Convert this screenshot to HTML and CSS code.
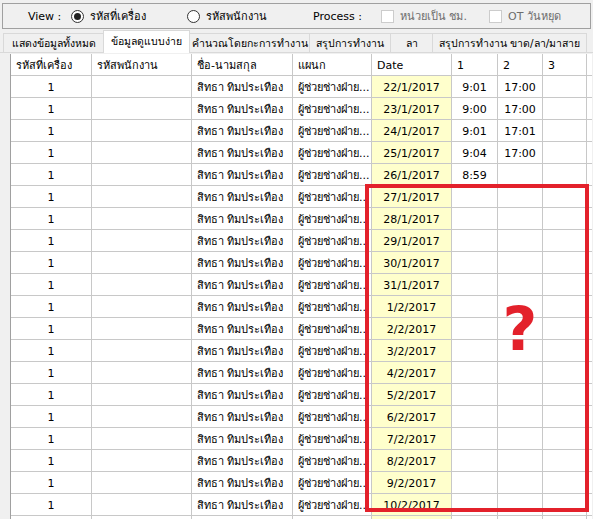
FILE: index.html
```html
<!DOCTYPE html>
<html lang="th">
<head>
<meta charset="utf-8">
<title>Time Attendance</title>
<link rel="stylesheet" href="styles.css">
</head>
<body>
<div class="window">
  <div class="viewbar">
    <span class="item view">View :</span>
    <span class="item radio1"><span class="rb on"></span>รหัสที่เครื่อง</span>
    <span class="item radio2"><span class="rb"></span>รหัสพนักงาน</span>
    <span class="item process">Process :</span>
    <span class="item check1 dis"><span class="cb"></span>หน่วยเป็น ชม.</span>
    <span class="item check2 dis"><span class="cb"></span>OT วันหยุด</span>
  </div>
  <div class="tabs">
    <span class="tab t1">แสดงข้อมูลทั้งหมด</span>
    <span class="tab t2 active">ข้อมูลดูแบบง่าย</span>
    <span class="tab t3">คำนวณโดยกะการทำงาน</span>
    <span class="tab t4">สรุปการทำงาน</span>
    <span class="tab t5">ลา</span>
    <span class="tab t6">สรุปการทำงาน ขาด/ลา/มาสาย</span>
  </div>
  <div class="panel">
    <table class="grid">
      <colgroup>
        <col class="c-mach"><col class="c-emp"><col class="c-name"><col class="c-dept"><col class="c-date"><col class="c-t1"><col class="c-t2"><col class="c-t3"><col class="c-fill">
      </colgroup>
      <thead>
        <tr><th>รหัสที่เครื่อง</th><th>รหัสพนักงาน</th><th>ชื่อ-นามสกุล</th><th>แผนก</th><th>Date</th><th>1</th><th>2</th><th>3</th><th class="fill"></th></tr>
      </thead>
      <tbody>
        <tr><td class="num">1</td><td></td><td>สิทธา ทิมประเทือง</td><td>ผู้ช่วยช่างฝ่าย...</td><td class="date">22/1/2017</td><td class="tm">9:01</td><td class="tm">17:00</td><td></td><td class="fill"></td></tr>
        <tr><td class="num">1</td><td></td><td>สิทธา ทิมประเทือง</td><td>ผู้ช่วยช่างฝ่าย...</td><td class="date">23/1/2017</td><td class="tm">9:00</td><td class="tm">17:00</td><td></td><td class="fill"></td></tr>
        <tr><td class="num">1</td><td></td><td>สิทธา ทิมประเทือง</td><td>ผู้ช่วยช่างฝ่าย...</td><td class="date">24/1/2017</td><td class="tm">9:01</td><td class="tm">17:01</td><td></td><td class="fill"></td></tr>
        <tr><td class="num">1</td><td></td><td>สิทธา ทิมประเทือง</td><td>ผู้ช่วยช่างฝ่าย...</td><td class="date">25/1/2017</td><td class="tm">9:04</td><td class="tm">17:00</td><td></td><td class="fill"></td></tr>
        <tr><td class="num">1</td><td></td><td>สิทธา ทิมประเทือง</td><td>ผู้ช่วยช่างฝ่าย...</td><td class="date">26/1/2017</td><td class="tm">8:59</td><td></td><td></td><td class="fill"></td></tr>
        <tr><td class="num">1</td><td></td><td>สิทธา ทิมประเทือง</td><td>ผู้ช่วยช่างฝ่าย...</td><td class="date">27/1/2017</td><td></td><td></td><td></td><td class="fill"></td></tr>
        <tr><td class="num">1</td><td></td><td>สิทธา ทิมประเทือง</td><td>ผู้ช่วยช่างฝ่าย...</td><td class="date">28/1/2017</td><td></td><td></td><td></td><td class="fill"></td></tr>
        <tr><td class="num">1</td><td></td><td>สิทธา ทิมประเทือง</td><td>ผู้ช่วยช่างฝ่าย...</td><td class="date">29/1/2017</td><td></td><td></td><td></td><td class="fill"></td></tr>
        <tr><td class="num">1</td><td></td><td>สิทธา ทิมประเทือง</td><td>ผู้ช่วยช่างฝ่าย...</td><td class="date">30/1/2017</td><td></td><td></td><td></td><td class="fill"></td></tr>
        <tr><td class="num">1</td><td></td><td>สิทธา ทิมประเทือง</td><td>ผู้ช่วยช่างฝ่าย...</td><td class="date">31/1/2017</td><td></td><td></td><td></td><td class="fill"></td></tr>
        <tr><td class="num">1</td><td></td><td>สิทธา ทิมประเทือง</td><td>ผู้ช่วยช่างฝ่าย...</td><td class="date">1/2/2017</td><td></td><td></td><td></td><td class="fill"></td></tr>
        <tr><td class="num">1</td><td></td><td>สิทธา ทิมประเทือง</td><td>ผู้ช่วยช่างฝ่าย...</td><td class="date">2/2/2017</td><td></td><td></td><td></td><td class="fill"></td></tr>
        <tr><td class="num">1</td><td></td><td>สิทธา ทิมประเทือง</td><td>ผู้ช่วยช่างฝ่าย...</td><td class="date">3/2/2017</td><td></td><td></td><td></td><td class="fill"></td></tr>
        <tr><td class="num">1</td><td></td><td>สิทธา ทิมประเทือง</td><td>ผู้ช่วยช่างฝ่าย...</td><td class="date">4/2/2017</td><td></td><td></td><td></td><td class="fill"></td></tr>
        <tr><td class="num">1</td><td></td><td>สิทธา ทิมประเทือง</td><td>ผู้ช่วยช่างฝ่าย...</td><td class="date">5/2/2017</td><td></td><td></td><td></td><td class="fill"></td></tr>
        <tr><td class="num">1</td><td></td><td>สิทธา ทิมประเทือง</td><td>ผู้ช่วยช่างฝ่าย...</td><td class="date">6/2/2017</td><td></td><td></td><td></td><td class="fill"></td></tr>
        <tr><td class="num">1</td><td></td><td>สิทธา ทิมประเทือง</td><td>ผู้ช่วยช่างฝ่าย...</td><td class="date">7/2/2017</td><td></td><td></td><td></td><td class="fill"></td></tr>
        <tr><td class="num">1</td><td></td><td>สิทธา ทิมประเทือง</td><td>ผู้ช่วยช่างฝ่าย...</td><td class="date">8/2/2017</td><td></td><td></td><td></td><td class="fill"></td></tr>
        <tr><td class="num">1</td><td></td><td>สิทธา ทิมประเทือง</td><td>ผู้ช่วยช่างฝ่าย...</td><td class="date">9/2/2017</td><td></td><td></td><td></td><td class="fill"></td></tr>
        <tr><td class="num">1</td><td></td><td>สิทธา ทิมประเทือง</td><td>ผู้ช่วยช่างฝ่าย...</td><td class="date">10/2/2017</td><td></td><td></td><td></td><td class="fill"></td></tr>
        <tr><td class="num"></td><td></td><td></td><td></td><td class="date"></td><td></td><td></td><td></td><td class="fill"></td></tr>
      </tbody>
    </table>
  </div>
  <div class="highlight"></div>
  <div class="question">?</div>
</div>
</body>
</html>
```
FILE: styles.css
```css
html, body {
  margin: 0;
  padding: 0;
  overflow: hidden;
}
body {
  width: 593px;
  height: 519px;
  background: #f0f0f0;
  font-family: "DejaVu Sans", "Noto Sans", Tahoma, sans-serif;
  font-size: 11px;
  color: #000;
}
.window {
  position: relative;
  height: 519px;
  overflow: hidden;
}
.viewbar {
  box-sizing: border-box;
  margin: 3px 2px 0 2px;
  height: 26px;
  border: 1px solid #a0a0a0;
  display: flex;
  align-items: center;
  white-space: nowrap;
}
.item {
  display: flex;
  align-items: center;
  flex: none;
}
.view { margin-left: 25px; width: 43px; }
.radio1 { width: 116px; }
.radio2 { width: 126px; }
.process { width: 68px; }
.check1 { width: 108px; }
.dis { color: #6d6d6d; }
.rb {
  box-sizing: border-box;
  width: 13px;
  height: 13px;
  border: 1px solid #333;
  border-radius: 50%;
  margin-right: 6px;
  display: grid;
  place-items: center;
  background: #fff;
}
.rb.on::after {
  content: "";
  width: 7px;
  height: 7px;
  border-radius: 50%;
  background: #222;
}
.cb {
  box-sizing: border-box;
  width: 13px;
  height: 13px;
  border: 1px solid #cccccc;
  background: #fff;
  margin-right: 6px;
}
.tabs {
  display: flex;
  align-items: flex-end;
  height: 23px;
  margin-top: 1px;
  padding-left: 3px;
  border-bottom: 1px solid #d9d9d9;
  box-sizing: border-box;
  font-size: 10.5px;
}
.tab {
  box-sizing: border-box;
  height: 19px;
  line-height: 18px;
  text-align: center;
  border: 1px solid #d9d9d9;
  border-bottom: none;
  border-left: none;
  background: #f0f0f0;
  white-space: nowrap;
  overflow: hidden;
  flex: none;
}
.t1 { width: 101px; border-left: 1px solid #d9d9d9; }
.t2 { width: 87px; }
.t3 { width: 120px; }
.t4 { width: 81px; }
.t5 { width: 42px; }
.t6 { width: 154px; }
.tab.active {
  height: 23px;
  line-height: 20px;
  background: #fff;
  margin-bottom: -1px;
  border-left: 1px solid #d9d9d9;
  margin-left: -1px;
}
.panel {
  padding-left: 10px;
  padding-top: 1px;
}
.grid {
  border-collapse: separate;
  border-spacing: 0;
  table-layout: fixed;
  width: 581px;
  background: #fff;
  border-left: 1px solid #a0a0a0;
}
.c-mach { width: 81px; }
.c-emp { width: 100px; }
.c-name { width: 101px; }
.c-dept { width: 79px; }
.c-date { width: 80px; }
.c-t1 { width: 46px; }
.c-t2 { width: 45px; }
.c-t3 { width: 44px; }
.c-fill { width: 5px; }
.grid th, .grid td {
  box-sizing: border-box;
  padding: 3px 5px 0 5px;
  line-height: 18px;
  height: 22px;
  border-right: 1px solid #c8c8c8;
  border-bottom: 1px solid #c8c8c8;
  white-space: nowrap;
  overflow: hidden;
  text-overflow: clip;
  font-weight: normal;
  text-align: left;
}
.grid th.fill, .grid td.fill {
  border-right: none;
  padding: 0;
}
.grid td.num, .grid td.date, .grid td.tm {
  text-align: center;
}
.grid td.date {
  background: #ffffcc;
}
.highlight {
  position: absolute;
  left: 365px;
  top: 184px;
  width: 224px;
  height: 328px;
  box-sizing: border-box;
  border: 4px solid #e3212b;
}
.question {
  position: absolute;
  left: 500px;
  top: 299px;
  width: 40px;
  text-align: center;
  font-family: "DejaVu Sans", sans-serif;
  font-weight: bold;
  font-size: 60px;
  line-height: 60px;
  color: #e3212b;
}
```
